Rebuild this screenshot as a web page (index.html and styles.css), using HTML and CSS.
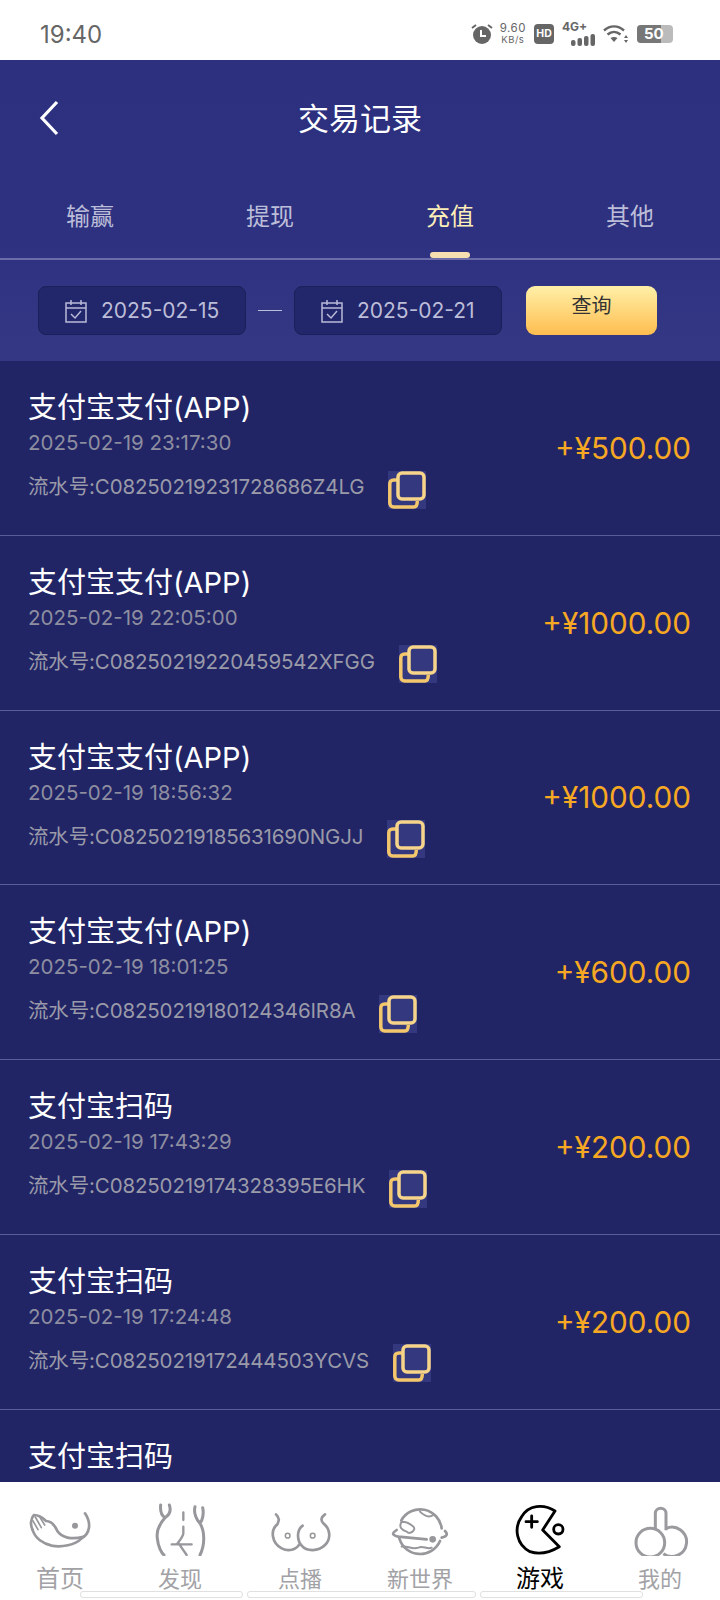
FILE: index.html
```html
<!DOCTYPE html>
<html lang="zh">
<head>
    <meta charset="UTF-8">
    <meta name="viewport" content="width=device-width, initial-scale=1.0">
    <title>交易记录</title>
    <link rel="stylesheet" href="styles.css">
</head>
<body>
    <div class="status-bar">
        <span class="clock">19:40</span>
        <div class="status-icons">
            <svg class="alarm" width="22" height="22" viewBox="0 0 22 22">
                <circle cx="11" cy="12" r="9" fill="#666"/>
                <path d="M10 7v6h5" fill="none" stroke="#fff" stroke-width="2"/>
                <path d="M1 5l4-3M21 5l-4-3" stroke="#666" stroke-width="2"/>
            </svg>
            <div class="net-speed"><span>9.60</span><span class="net-unit">KB/s</span></div>
            <span class="hd-badge">HD</span>
            <div class="signal">
                <span class="signal-label">4G+</span>
                <svg width="24" height="12" viewBox="0 0 24 12">
                    <rect x="0" y="6" width="4.500" height="6" rx="2" fill="#666"/>
                    <rect x="6.500" y="4" width="4.500" height="8" rx="2" fill="#666"/>
                    <rect x="13" y="2" width="4.500" height="10" rx="2" fill="#666"/>
                    <rect x="19.500" y="0" width="4.500" height="12" rx="2" fill="#666"/>
                </svg>
            </div>
            <svg width="26" height="20" viewBox="0 0 26 20">
                <path d="M1 6.500C7 1 15 1 21 6.500" fill="none" stroke="#666" stroke-width="2.400"/>
                <path d="M4.500 10.500C8.500 7 13.500 7 17.500 10.500" fill="none" stroke="#666" stroke-width="2.400"/>
                <path d="M11 18l-3.500-4c2-1.500 5-1.500 7 0z" fill="#666"/>
                <path d="M23 11l-2 3h4zM23 19l-2-3h4z" fill="#666"/>
            </svg>
            <div class="battery"><span class="battery-level">50</span></div>
        </div>
    </div>

    <div class="top-panel">
        <div class="title-bar">
            <svg class="back-icon" width="22" height="36" viewBox="0 0 22 36">
                <path d="M19 2L4 18l15 16" fill="none" stroke="#fff" stroke-width="3.200"/>
            </svg>
            <h1>交易记录</h1>
        </div>
        <div class="tabs">
            <div class="tab">输赢</div>
            <div class="tab">提现</div>
            <div class="tab active">充值</div>
            <div class="tab">其他</div>
        </div>
        <div class="filter">
            <div class="date-box">
                <svg width="26" height="26" viewBox="0 0 24 26">
                    <path d="M2 5h20v19H2zM2 10h20M7 2v5M17 2v5" fill="none" stroke="#b9bad8" stroke-width="1.500"/>
                    <path d="M7 16l4 4 6-7" fill="none" stroke="#b9bad8" stroke-width="1.500"/>
                </svg>
                <span>2025-02-15</span>
            </div>
            <span class="date-sep"></span>
            <div class="date-box">
                <svg width="26" height="26" viewBox="0 0 24 26">
                    <path d="M2 5h20v19H2zM2 10h20M7 2v5M17 2v5" fill="none" stroke="#b9bad8" stroke-width="1.500"/>
                    <path d="M7 16l4 4 6-7" fill="none" stroke="#b9bad8" stroke-width="1.500"/>
                </svg>
                <span>2025-02-21</span>
            </div>
            <div class="query-btn">查询</div>
        </div>
    </div>

    <div class="record-list" id="list"></div>

    <div class="bottom-nav">
        <div class="nav-item large">
            <svg width="72" height="56" viewBox="12 15 216 168" fill="none" stroke="#97979c" stroke-width="8" stroke-linecap="round">
                <path d="M195 55C215 85 210 115 185 130C165 150 125 158 95 152C70 146 45 130 38 105"/>
                <path d="M38 105C30 90 32 70 42 60C55 60 70 70 78 78C95 78 105 92 112 108C125 128 155 135 190 125"/>
                <path d="M46 66L64 98M38 76L54 104M58 64L74 90" stroke-width="5"/>
                <circle cx="165" cy="92" r="9" fill="#97979c" stroke="none"/>
            </svg>
            <span>首页</span>
        </div>
        <div class="nav-item">
            <svg width="72" height="56" viewBox="372 15 216 168" fill="none" stroke="#97979c" stroke-width="9" stroke-linecap="round">
                <path d="M422 30C420 50 425 62 435 68M448 30C455 50 445 62 435 68C420 85 408 105 412 130C414 155 425 175 432 180"/>
                <path d="M525 35C520 55 530 75 540 85M548 38C552 55 548 75 540 85C555 110 555 150 540 180"/>
                <path d="M490 52V75M490 95V115C490 125 480 135 470 148M455 148H515M478 148L500 180" stroke-width="7"/>
            </svg>
            <span>发现</span>
        </div>
        <div class="nav-item">
            <svg width="72" height="56" viewBox="12 15 216 168" fill="none" stroke="#97979c" stroke-width="8" stroke-linecap="round">
                <path d="M48 58C62 72 55 80 52 88C30 105 35 145 65 160C85 170 108 165 118 148"/>
                <path d="M128 92C110 105 110 135 125 152C140 170 175 170 195 150C215 130 210 100 190 85C180 75 185 65 195 58"/>
                <circle cx="83" cy="122" r="7" stroke-width="4.500"/>
                <circle cx="158" cy="122" r="7" stroke-width="4.500"/>
            </svg>
            <span>点播</span>
        </div>
        <div class="nav-item">
            <svg width="72" height="56" viewBox="372 15 216 168" fill="none" stroke="#97979c" stroke-width="8" stroke-linecap="round">
                <path d="M424 76A65 65 0 0 1 545 100M540 138A65 65 0 0 1 418 130"/>
                <path d="M410 105C395 115 395 120 415 125L500 133M545 128C560 125 565 118 555 108"/>
                <path d="M425 80C440 80 450 85 460 95C470 105 450 120 440 110C425 105 415 95 425 80z" stroke-width="6"/>
                <path d="M480 50C490 60 505 70 520 60M425 155C440 150 455 165 475 158C490 150 500 165 515 158" stroke-width="6"/>
                <circle cx="518" cy="133" r="10" fill="#97979c" stroke="none"/>
            </svg>
            <span>新世界</span>
        </div>
        <div class="nav-item large current">
            <svg width="72" height="56" viewBox="12 15 216 168" fill="none" stroke="#000" stroke-width="8.500" stroke-linejoin="round" stroke-linecap="round">
                <path d="M165 48C130 25 85 30 65 65C40 100 50 150 90 170C120 180 150 172 178 155L128 105z"/>
                <circle cx="175" cy="103" r="14"/>
                <path d="M78 80H112M95 63V97"/>
            </svg>
            <span>游戏</span>
        </div>
        <div class="nav-item">
            <svg width="72" height="56" viewBox="372 15 216 168" fill="none" stroke="#9b9b9f" stroke-width="9">
                <circle cx="451" cy="143" r="43"/>
                <path d="M498 100A44 44 0 1 1 490 176"/>
                <path d="M466 103V55C466 35 498 35 498 55V106"/>
            </svg>
            <span>我的</span>
        </div>
    </div>
    <div class="nav-strip">
        <span class="strip-a"></span>
        <span class="strip-b"></span>
        <span class="strip-c"></span>
    </div>

    <script src="list.js"></script>
</body>
</html>
```

FILE: styles.css
```css
* {
    box-sizing: border-box;
}
html, body {
    margin: 0;
    height: 1600px;
    overflow: hidden;
}
body {
    display: flex;
    flex-direction: column;
    position: relative;
    font-family: Inter, "Noto Sans CJK SC", sans-serif;
    background: #fff;
}
.status-bar {
    height: 60px;
    flex: none;
    display: flex;
    align-items: center;
    justify-content: space-between;
    padding: 8px 47px 0 40px;
    background: #fff;
    color: #666;
}
.clock {
    font-size: 24px;
}
.status-icons {
    display: flex;
    align-items: center;
    gap: 8px;
}
.alarm {
    margin-right: -1px;
}
.net-speed {
    display: flex;
    flex-direction: column;
    align-items: center;
    font-size: 11.500px;
    line-height: 11px;
    letter-spacing: 0.5px;
    color: #666;
}
.net-unit {
    font-size: 9.500px;
}
.hd-badge {
    width: 20px;
    height: 20px;
    border-radius: 4px;
    background: #666;
    color: #fff;
    font-size: 10.500px;
    font-weight: 700;
    line-height: 20px;
    text-align: center;
}
.signal {
    display: flex;
    flex-direction: column;
    height: 26px;
    width: 33px;
}
.signal-label {
    font-size: 12px;
    font-weight: 700;
    line-height: 12px;
}
.signal svg {
    margin-top: 1px;
    align-self: flex-end;
}
.battery {
    width: 36px;
    height: 18px;
    border-radius: 4px;
    background: #bbb;
    overflow: hidden;
}
.battery-level {
    display: block;
    width: 24px;
    height: 18px;
    background: #777;
    color: #fff;
    font-size: 15px;
    font-weight: 700;
    line-height: 18px;
    padding-left: 7px;
    white-space: nowrap;
}
.top-panel {
    flex: none;
    height: 301px;
    background: linear-gradient(180deg, #2c307f 0%, #2d3180 60%, #343884 100%);
}
.title-bar {
    height: 116px;
    position: relative;
    display: flex;
    align-items: center;
    justify-content: center;
    padding-bottom: 4px;
}
.title-bar h1 {
    margin: 0;
    font-size: 31px;
    font-weight: 400;
    color: #fff;
}
.back-icon {
    position: absolute;
    left: 38px;
    top: 40px;
}
.tabs {
    height: 84px;
    display: grid;
    grid-template-columns: repeat(4, 1fr);
    border-bottom: 2px solid #6a6da9;
}
.tab {
    position: relative;
    padding-top: 17px;
    text-align: center;
    font-size: 24px;
    line-height: 48px;
    color: #bcbdd8;
}
.tab.active {
    color: #fdeeb8;
}
.tab.active::after {
    content: "";
    position: absolute;
    left: 70px;
    bottom: 0;
    width: 40px;
    height: 6px;
    border-radius: 3px;
    background: #f5deb0;
}
.filter {
    display: flex;
    align-items: center;
    padding: 26px 0 0 38px;
}
.date-box {
    width: 208px;
    height: 49px;
    display: flex;
    align-items: center;
    gap: 12px;
    padding-left: 24px;
    background: #22266a;
    border: 1px solid #1c2058;
    border-radius: 8px;
    color: #bcbdd8;
    font-size: 21px;
}
.date-sep {
    width: 24px;
    height: 1px;
    margin: 0 12px;
    background: #bcbdd8;
}
.query-btn {
    width: 131px;
    height: 49px;
    margin-left: 24px;
    border-radius: 9px;
    background: linear-gradient(180deg, #fff0a8 0%, #ffbd4f 100%);
    color: #333;
    font-size: 20px;
    line-height: 41px;
    text-align: center;
}
.record-list {
    flex: 1;
    min-height: 0;
    overflow: hidden;
    background: #212566;
}
.record {
    height: 174.750px;
    display: flex;
    align-items: center;
    justify-content: space-between;
    padding: 0 29px 0 28px;
    border-bottom: 1px solid #5a5d98;
}
.record.partial {
    height: auto;
    border-bottom: 0;
}
.record-info {
    align-self: flex-start;
    padding-top: 29px;
}
.record-title {
    font-size: 29px;
    line-height: 36px;
    color: #fff;
}
.record-time {
    font-size: 20.500px;
    line-height: 30px;
    color: #8e8ea0;
    margin-top: 2px;
}
.record-no {
    display: flex;
    align-items: center;
    margin-top: 12px;
    font-size: 20.500px;
    letter-spacing: -0.15px;
    color: #9a9aa8;
}
.record-no span {
    margin-bottom: 9px;
}
.copy-icon {
    margin-left: 24px;
    background: #33387f;
}
.record-amount {
    font-size: 29.700px;
    color: #f7a823;
}
.bottom-nav {
    flex: none;
    height: 118px;
    display: grid;
    grid-template-columns: repeat(6, 1fr);
    background: #fff;
}
.nav-item {
    display: flex;
    flex-direction: column;
    align-items: center;
    padding-top: 18px;
    font-size: 22px;
    line-height: 34px;
    color: #a2a2a6;
}
.nav-item.large {
    font-size: 24px;
}
.nav-item.current {
    color: #000;
}
.nav-item svg {
    display: block;
    margin-bottom: 6px;
}
.nav-strip {
    position: absolute;
    left: 80px;
    bottom: 2px;
    display: flex;
    gap: 4px;
}
.nav-strip span {
    height: 7px;
    border: 1px solid #e0e0e0;
    border-radius: 3px;
}
.strip-a {
    width: 163px;
}
.strip-b {
    width: 229px;
}
.strip-c {
    width: 163px;
}
```

FILE: list.js
```js
// 充值记录
var records = [
    ['支付宝支付(APP)', '2025-02-19 23:17:30', 'C08250219231728686Z4LG', '+¥500.00'],
    ['支付宝支付(APP)', '2025-02-19 22:05:00', 'C08250219220459542XFGG', '+¥1000.00'],
    ['支付宝支付(APP)', '2025-02-19 18:56:32', 'C08250219185631690NGJJ', '+¥1000.00'],
    ['支付宝支付(APP)', '2025-02-19 18:01:25', 'C08250219180124346IR8A', '+¥600.00'],
    ['支付宝扫码', '2025-02-19 17:43:29', 'C08250219174328395E6HK', '+¥200.00'],
    ['支付宝扫码', '2025-02-19 17:24:48', 'C08250219172444503YCVS', '+¥200.00'],
    ['支付宝扫码']
];

var copyIcon = '<svg class="copy-icon" width="38" height="38" viewBox="0 0 38 38" fill="none" stroke-width="3.500">' +
    '<path d="M9 9H6C3 9 1.800 10.500 1.800 13v19c0 2 1.500 4 4 4h20c2 0 3.500-2 3.500-6" stroke="#f4c76c"/>' +
    '<rect x="10" y="2" width="26" height="26" rx="4" stroke="#f6d48a"/></svg>';

document.getElementById('list').innerHTML = records.map(function (r) {
    if (!r[1]) {
        return '<div class="record partial"><div class="record-info">' +
            '<div class="record-title">' + r[0] + '</div></div></div>';
    }
    return '<div class="record"><div class="record-info">' +
        '<div class="record-title">' + r[0] + '</div>' +
        '<div class="record-time">' + r[1] + '</div>' +
        '<div class="record-no"><span>流水号:' + r[2] + '</span>' + copyIcon + '</div>' +
        '</div><div class="record-amount">' + r[3] + '</div></div>';
}).join('');
```
